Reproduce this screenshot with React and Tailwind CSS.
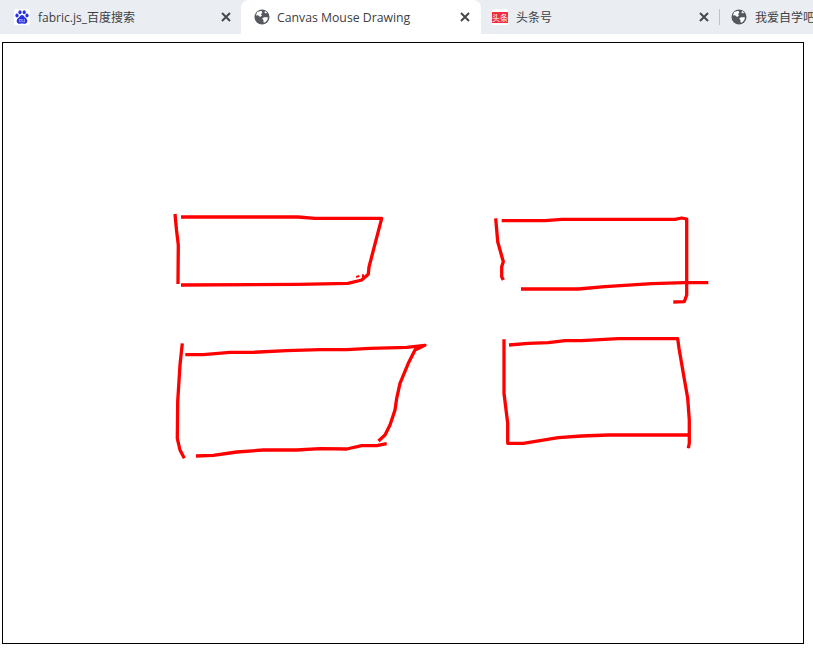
import React from "react";

const strokes = [
  // top left box
  "175,214 176.5,230 178.3,245 178,284",
  "181,217 298,217 315,218.3 381.7,218.3 369,267 368.3,274.3 361.7,280 348,283.3 298,284.3 181,285",
  "357.5,275.5 358,277.5",
  "362,276 364,276",
  // top right box
  "495.7,218.3 497.7,241.7 503.3,261.7 501.7,266.7 501.7,276.7 503.3,280",
  "501.7,220.7 545,220.7 561.7,219.3 675,219.3 681.7,218 686.7,219 686.7,295 684.3,301.7 673.3,302",
  "521,289 578.3,289 605,286.7 651.7,283.7 685,282.7 708.3,282.7",
  // bottom left box
  "182.3,343.3 180,365 177.7,401.7 177.3,438.3 180,450 184.3,458.3",
  "185.3,354.7 203.3,354.7 230,352.3 253.3,352.3 286.7,350.7 320,349.7 346.7,349.7 370,348.3 406.7,347.3 425,345.3 415,350 408.3,363.3 400,383.3 396.7,398.3 395,410 390,425 385,435 378.5,441",
  "196,456 213.3,455.3 236.7,452 263.3,450 296.7,450 320,448.7 346.7,449 361.7,445.7 376.7,445.7 386.7,443.7",
  // bottom right box
  "504,339.3 504,393.3 507.7,423.3 507.7,443.3 523.3,443.3 558.3,437.7 581.7,436 608.3,435 689,435",
  "509,345 528.3,343.3 548.3,342.7 565,340.7 581.7,340.7 618.3,338.7 677.7,338.7 679,348.3 683.3,373.3 687.7,398.3 689.3,420 689.3,443.3 688.3,448.3",
];

const fontStack = "font-['Open_Sans','Noto_Sans_CJK_SC',sans-serif]";

const Globe = () => (
  <svg viewBox="0 0 16 16" className="w-4 h-4 shrink-0">
    <circle cx="8" cy="8" r="7.5" fill="#55585f" />
    <path d="M3.2 3 L7.2 1.8 L8.4 3.4 L7 5.2 L8 6.6 L6.2 8 L4 6.2 L1.9 6.4 Z" fill="#fff" />
    <path d="M10 8.2 L13.9 8.2 L13.4 11 L11 13.6 L9.6 13.6 L9.4 11 L8.2 9.6 Z" fill="#fff" />
    <path d="M11 1.9 L13 3.4 L12 4.6 L10.4 3.4 Z" fill="#fff" />
  </svg>
);

const BaiduIcon = () => (
  <svg viewBox="0 0 16 16" className="w-4 h-4 shrink-0">
    <rect width="16" height="16" rx="2" fill="#fff" />
    <g fill="#2932e1">
      <ellipse cx="6" cy="3.2" rx="1.6" ry="2" />
      <ellipse cx="10.2" cy="3.2" rx="1.6" ry="2" />
      <ellipse cx="3" cy="6.6" rx="1.6" ry="2" />
      <ellipse cx="13" cy="6.6" rx="1.6" ry="2" />
      <path d="M8 6 C6.4 6 5.8 7.8 4.6 8.8 C3.2 9.8 2.4 11 2.8 12.8 C3.2 14.6 5 15 6.4 14.7 C7.4 14.5 8.6 14.5 9.6 14.7 C11 15 12.8 14.6 13.2 12.8 C13.6 11 12.8 9.8 11.4 8.8 C10.2 7.8 9.6 6 8 6 Z" />
    </g>
    <rect x="5" y="10" width="2.6" height="3.2" fill="#9aa0f0" />
    <rect x="8.4" y="10" width="2.6" height="3.2" fill="#9aa0f0" />
    <rect x="5.8" y="11" width="1" height="1.4" fill="#2932e1" />
    <rect x="9.2" y="10" width="1" height="2.4" fill="#2932e1" />
  </svg>
);

const ToutiaoIcon = () => (
  <div className="w-4 h-4 shrink-0 flex items-center bg-white rounded-[2px]">
    <div className="w-4 h-[11px] bg-[#f0303c] text-white text-[8px] leading-[11px] text-center overflow-hidden whitespace-nowrap">
      头条
    </div>
  </div>
);

const CloseIcon = () => (
  <svg viewBox="0 0 10 10" className="w-[10px] h-[10px] shrink-0" stroke="#45484d" strokeWidth="2">
    <path d="M1 1 L9 9 M9 1 L1 9" />
  </svg>
);

const Tab = ({ icon, title, className, textClass }) => (
  <div className={`flex items-center h-full shrink-0 ${className}`}>
    {icon}
    <span className={`flex-1 pt-[2px] text-[#3c4043] whitespace-nowrap overflow-hidden ${textClass}`}>{title}</span>
    <CloseIcon />
  </div>
);

export default function App() {
  return (
    <div className={`w-[813px] h-[648px] bg-white overflow-hidden ${fontStack}`}>
      <div className="flex h-[34px] bg-[#eaedf2]">
        <Tab
          icon={<BaiduIcon />}
          title="fabric.js_百度搜索"
          className="w-[241px] bg-[#eaedf2] rounded-br-lg pl-[14px] pr-[10px]"
          textClass="ml-2 text-[12px]"
        />
        <Tab
          icon={<Globe />}
          title="Canvas Mouse Drawing"
          className="w-[240px] bg-white rounded-t-lg pl-[13px] pr-[11px]"
          textClass="ml-[7px] text-[12.25px]"
        />
        <Tab
          icon={<ToutiaoIcon />}
          title="头条号"
          className="w-[238px] bg-[#eaedf2] rounded-bl-lg pl-[11px] pr-[10px]"
          textClass="ml-2 text-[12px]"
        />
        <div className="w-px h-4 my-[9px] bg-[#bfc2c8] shrink-0" />
        <div className="flex items-center h-full pl-[11px] overflow-hidden">
          <Globe />
          <span className="ml-2 pt-[2px] text-[12px] text-[#3c4043] whitespace-nowrap">我爱自学吧</span>
        </div>
      </div>
      <div className="w-[802px] h-[602px] ml-[2px] mt-2 border border-black bg-white">
        <svg viewBox="3 43 800 600" className="block w-[800px] h-[600px]">
          {strokes.map((points, i) => (
            <polyline
              key={i}
              points={points}
              fill="none"
              stroke="#ff0000"
              strokeWidth="3.3"
              strokeLinejoin="round"
            />
          ))}
        </svg>
      </div>
    </div>
  );
}
